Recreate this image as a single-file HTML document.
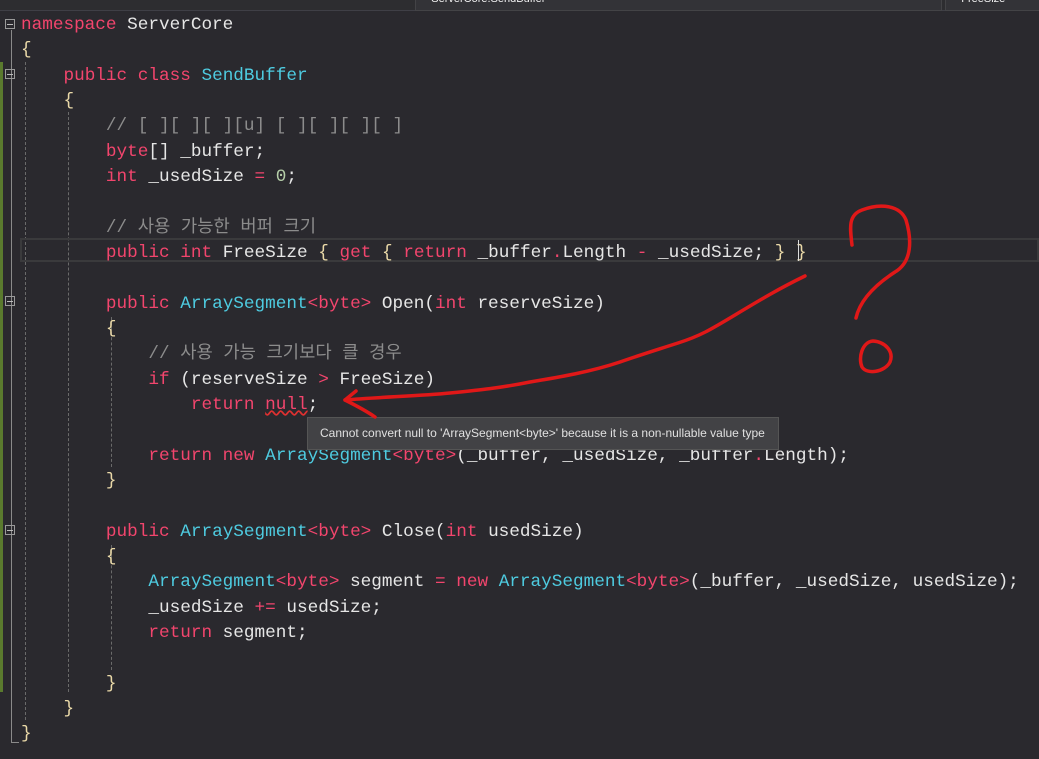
<!DOCTYPE html>
<html><head><meta charset="utf-8"><style>
body{margin:0;width:1039px;height:759px;background:#2a292e;overflow:hidden;position:relative;font-family:"Liberation Mono","Noto Sans CJK KR",monospace;}
.top{position:absolute;left:0;top:0;width:1039px;height:10px;background:#2d2d30;border-bottom:1px solid #3f3f46;}
.dd{position:absolute;top:-8px;height:17px;background:#333337;border:1px solid #434346;color:#f1f1f1;font:11px "Liberation Sans",sans-serif;line-height:12px}
.code{position:absolute;left:21px;top:13px;font-size:17.7px;line-height:25.33px;color:#e6e6e6;white-space:pre;}
.k{color:#f2456d}.t{color:#4ecbe0}.c{color:#8c8c8c}.b{color:#ead9a8}.n{color:#b5cea8}
.g{position:absolute;border-left:1px dashed #6a6a6a;width:0}
.fold{position:absolute;left:5px;width:10px;height:10px;border:1px solid #9a9a9a;box-sizing:border-box}
.fold:after{content:"";position:absolute;left:1px;top:4px;width:6px;height:1px;background:#bbb}
</style></head><body>
<div class="top"><div class="dd" style="left:415px;width:525px">&nbsp;&nbsp;&nbsp;&nbsp;&nbsp;ServerCore.SendBuffer</div><div class="dd" style="left:945px;width:100px">&nbsp;&nbsp;&nbsp;&nbsp;&nbsp;FreeSize</div></div>
<div style="position:absolute;left:0;top:62px;width:3px;height:630px;background:#5a7a2e"></div>
<div style="position:absolute;left:11px;top:30px;width:1px;height:712px;background:#8a8a8a"></div>
<div style="position:absolute;left:11px;top:742px;width:8px;height:1px;background:#8a8a8a"></div>
<div class="fold" style="top:19px"></div><div class="fold" style="top:69px"></div><div class="fold" style="top:296px"></div><div class="fold" style="top:525px"></div>
<div class="g" style="left:25px;top:62px;height:658px"></div>
<div class="g" style="left:68px;top:112px;height:580px"></div>
<div class="g" style="left:111px;top:317px;height:150px"></div>
<div class="g" style="left:111px;top:545px;height:125px"></div>
<div style="position:absolute;left:20px;top:238px;width:1019px;height:24px;border:2px solid #3a3a3c;box-sizing:border-box"></div>
<div class="code"><span class="k">namespace</span> ServerCore
<span class="b">{</span>
    <span class="k">public class</span> <span class="t">SendBuffer</span>
    <span class="b">{</span>
        <span class="c">// [ ][ ][ ][u] [ ][ ][ ][ ]</span>
        <span class="k">byte</span>[] _buffer;
        <span class="k">int</span> _usedSize <span class="k">=</span> <span class="n">0</span>;

        <span class="c">// 사용 가능한 버퍼 크기</span>
        <span class="k">public int</span> FreeSize <span class="b">{</span> <span class="k">get</span> <span class="b">{</span> <span class="k">return</span> _buffer<span class="k">.</span>Length <span class="k">-</span> _usedSize; <span class="b">}</span> <span class="b">}</span>

        <span class="k">public</span> <span class="t">ArraySegment</span><span class="k">&lt;byte&gt;</span> Open(<span class="k">int</span> reserveSize)
        <span class="b">{</span>
            <span class="c">// 사용 가능 크기보다 클 경우</span>
            <span class="k">if</span> (reserveSize <span class="k">&gt;</span> FreeSize)
                <span class="k">return</span> <span class="k" style="text-decoration:underline wavy #e03030">null</span>;

            <span class="k">return new</span> <span class="t">ArraySegment</span><span class="k">&lt;byte&gt;</span>(_buffer, _usedSize, _buffer<span class="k">.</span>Length);
        <span class="b">}</span>

        <span class="k">public</span> <span class="t">ArraySegment</span><span class="k">&lt;byte&gt;</span> Close(<span class="k">int</span> usedSize)
        <span class="b">{</span>
            <span class="t">ArraySegment</span><span class="k">&lt;byte&gt;</span> segment <span class="k">=</span> <span class="k">new</span> <span class="t">ArraySegment</span><span class="k">&lt;byte&gt;</span>(_buffer, _usedSize, usedSize);
            _usedSize <span class="k">+=</span> usedSize;
            <span class="k">return</span> segment;

        <span class="b">}</span>
    <span class="b">}</span>
<span class="b">}</span></div>
<div style="position:absolute;left:798px;top:240px;width:1px;height:21px;background:#ddd"></div>
<div style="position:absolute;left:307px;top:417px;width:472px;height:33px;background:#424245;border:1px solid #555;box-sizing:border-box;color:#e0e0e0;font:12px 'Liberation Sans',sans-serif;line-height:31px;padding-left:12px">Cannot convert null to 'ArraySegment&lt;byte&gt;' because it is a non-nullable value type</div>
<svg style="position:absolute;left:0;top:0" width="1039" height="759" fill="none" stroke="#e01818" stroke-width="3.5" stroke-linecap="round" stroke-linejoin="round">
<path d="M852,245 C850,228 848,215 862,210 C880,203 900,205 906,220 C912,240 912,262 895,272 C875,285 860,300 856,318"/>
<path d="M873,341 C862,342 858,358 862,367 C867,375 885,372 890,362 C894,352 886,342 873,341 Z"/>
<path d="M805,276 C780,288 760,300 735,315 C710,330 700,336 678,343 C650,352 640,355 620,362 C590,372 560,377 530,382 C500,388 480,390 450,393 C420,396 380,397 345,400"/>
<path d="M356,391 L345,400 C355,405 365,410 375,417"/>
</svg>
</body></html>
